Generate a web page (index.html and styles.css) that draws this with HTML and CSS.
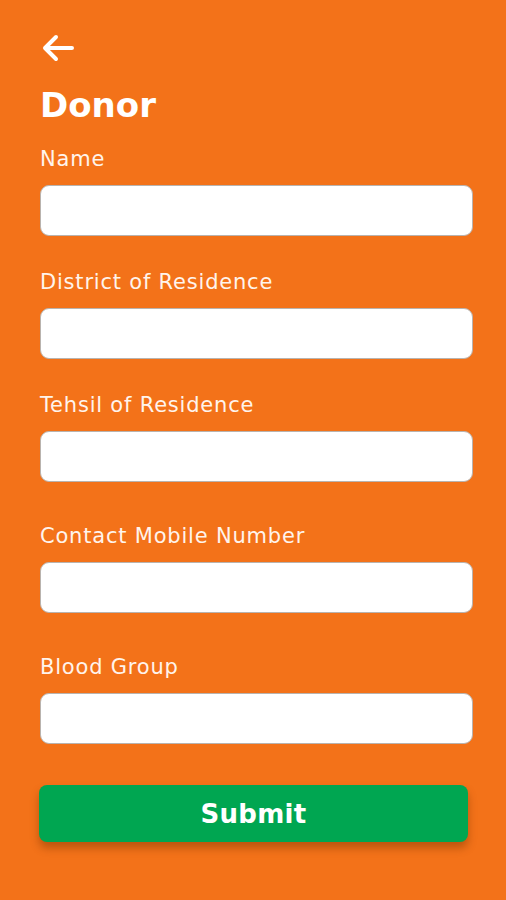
FILE: index.html
```html
<!DOCTYPE html>
<html lang="en">
<head>
    <meta charset="UTF-8">
    <meta name="viewport" content="width=device-width, initial-scale=1.0">
    <title>Donor</title>
    <link rel="stylesheet" href="styles.css">
</head>
<body>
    <div class="page">
        <button class="back" aria-label="Back">
            <svg width="34" height="28" viewBox="0 0 34 28">
                <path d="M31 14H4M15 3L4 14l11 11" fill="none" stroke="#fff" stroke-width="4" stroke-linecap="round" stroke-linejoin="round"/>
            </svg>
        </button>
        <h1 class="title">Donor</h1>

        <form class="form">
            <div class="field">
                <label for="name">Name</label>
                <input type="text" id="name" class="input">
            </div>
            <div class="field">
                <label for="district">District of Residence</label>
                <input type="text" id="district" class="input">
            </div>
            <div class="field">
                <label for="tehsil">Tehsil of Residence</label>
                <input type="text" id="tehsil" class="input">
            </div>
            <div class="field wide">
                <label for="mobile">Contact Mobile Number</label>
                <input type="tel" id="mobile" class="input">
            </div>
            <div class="field wide">
                <label for="blood">Blood Group</label>
                <input type="text" id="blood" class="input">
            </div>
            <button type="button" class="submit">Submit</button>
        </form>
    </div>
</body>
</html>
```

FILE: styles.css
```css
body {
    margin: 0;
    background: #f37219;
    font-family: "DejaVu Sans", sans-serif;
    color: #fff;
}
.page {
    padding: 34px 33px 40px 40px;
}
.back {
    display: block;
    background: none;
    border: none;
    padding: 0;
    margin: 0 0 0 1px;
    height: 28px;
    cursor: pointer;
}
.title {
    font-size: 34px;
    font-weight: bold;
    margin: 25px 0 0;
    line-height: 36px;
}
.form {
    display: flex;
    flex-direction: column;
    margin-top: 24px;
}
.field {
    display: flex;
    flex-direction: column;
    margin-bottom: 34px;
}
.field.wide {
    margin-top: 8px;
}
.field label {
    font-size: 21px;
    line-height: 24px;
    letter-spacing: 0.8px;
    color: #fff4ec;
    margin-bottom: 14px;
}
.input {
    height: 51px;
    box-sizing: border-box;
    border: 1px solid #b9b3ae;
    border-radius: 9px;
    background: #fff;
    font-size: 18px;
    padding: 0 14px;
}
.submit {
    margin: 7px 5px 0 -1px;
    height: 57px;
    border: none;
    border-radius: 8px;
    background: #00a651;
    color: #fff;
    font-family: "DejaVu Sans", sans-serif;
    font-size: 26px;
    font-weight: bold;
    letter-spacing: 0.3px;
    box-shadow: 0 6px 8px rgba(120, 50, 0, 0.45);
    cursor: pointer;
}
```
